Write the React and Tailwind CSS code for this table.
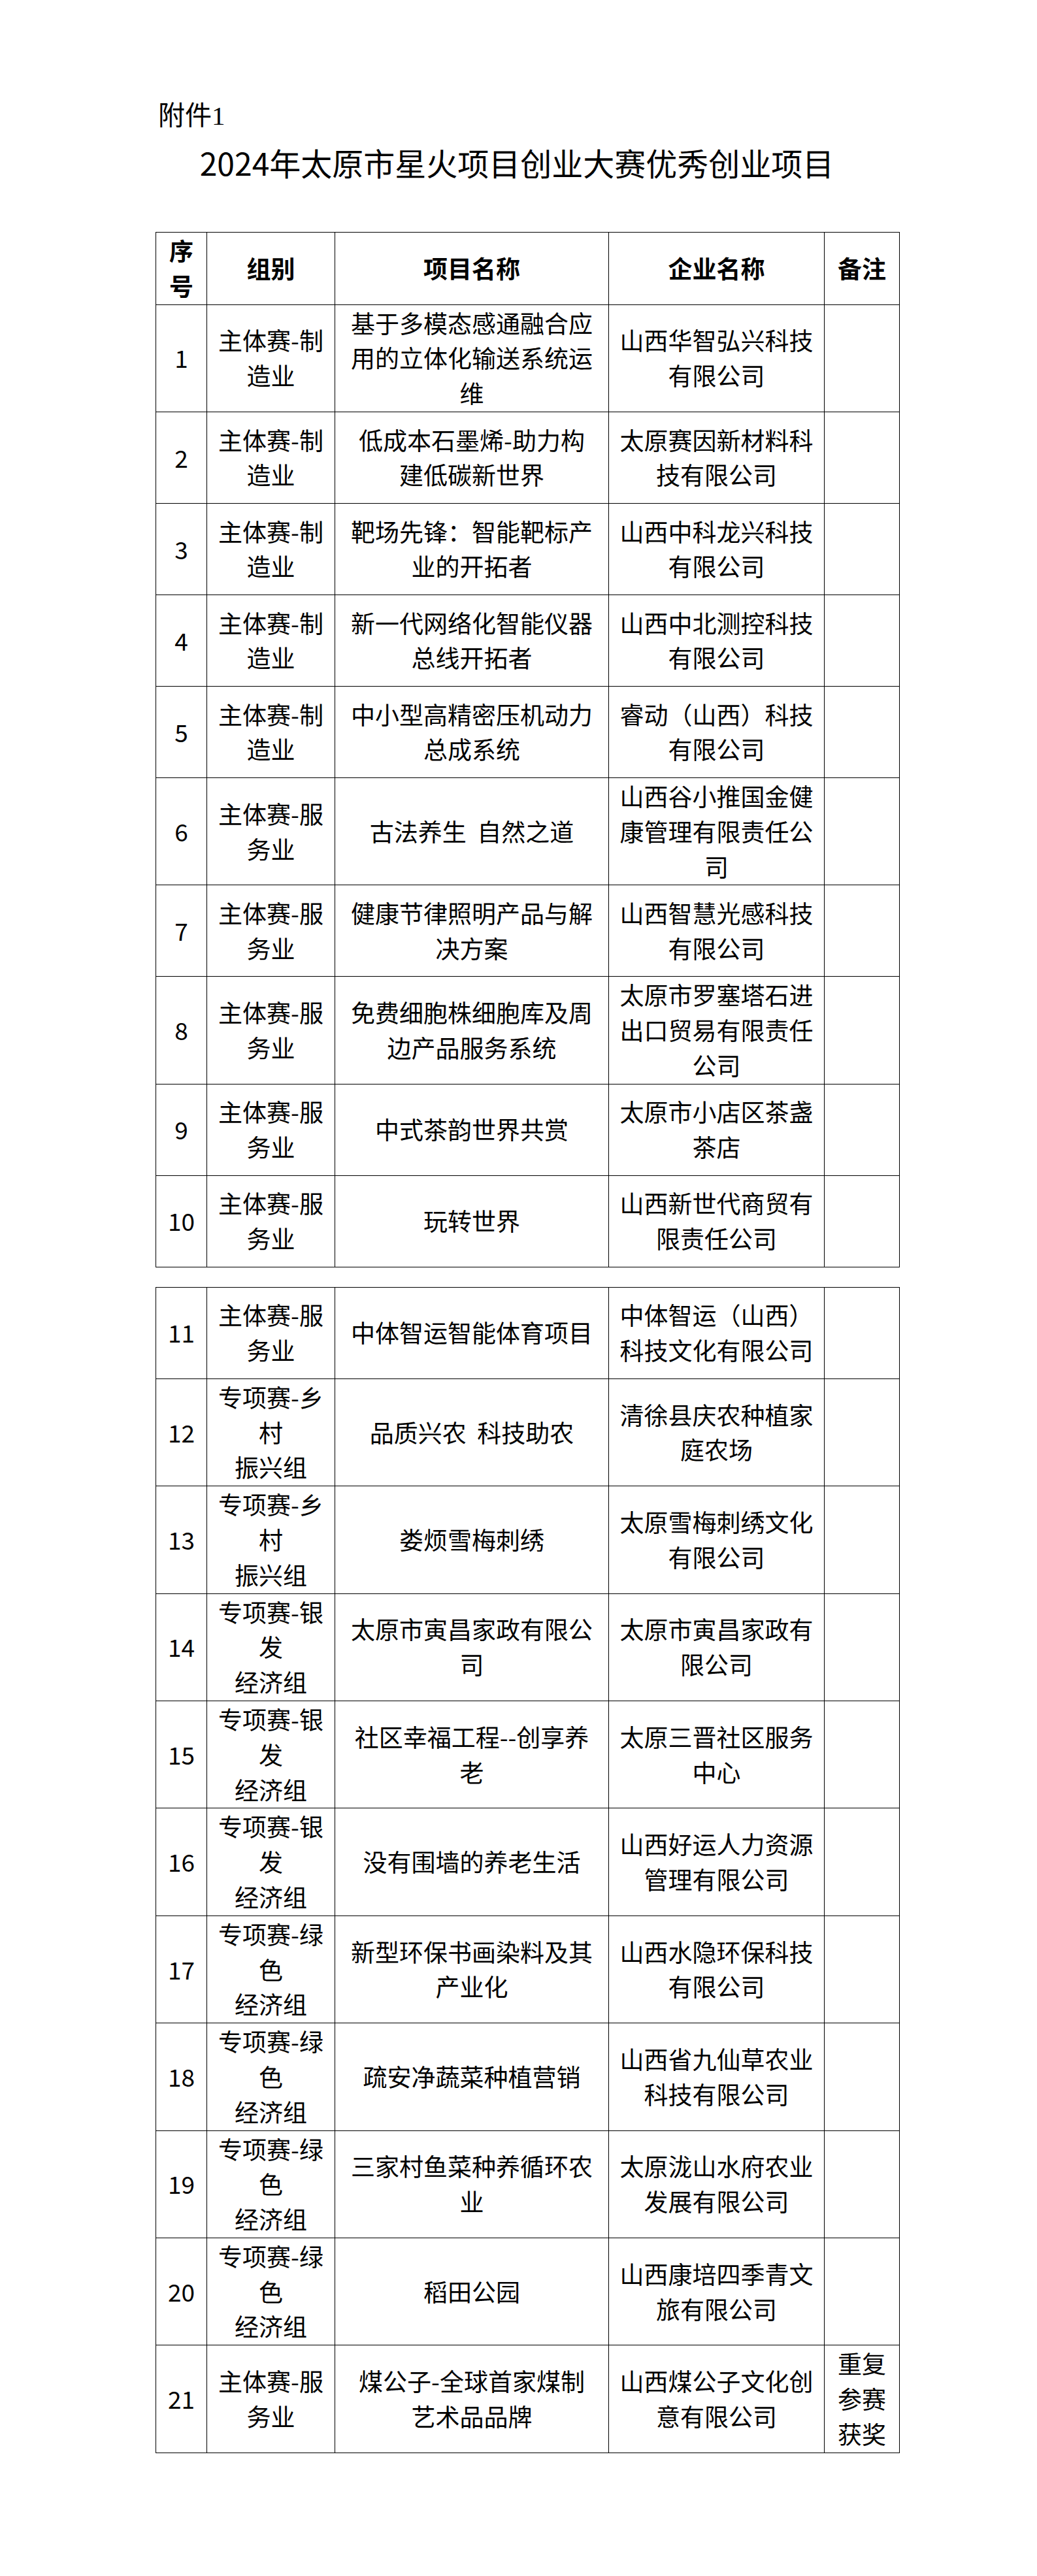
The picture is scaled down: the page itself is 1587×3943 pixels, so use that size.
import React from "react";

const FONT = { fontFamily: '"Noto Sans CJK SC", "Noto Sans", sans-serif' };

const table1 = [
  ["1", ["主体赛-制", "造业"], ["基于多模态感通融合应", "用的立体化输送系统运", "维"], ["山西华智弘兴科技", "有限公司"], []],
  ["2", ["主体赛-制", "造业"], ["低成本石墨烯-助力构", "建低碳新世界"], ["太原赛因新材料科", "技有限公司"], []],
  ["3", ["主体赛-制", "造业"], ["靶场先锋：智能靶标产", "业的开拓者"], ["山西中科龙兴科技", "有限公司"], []],
  ["4", ["主体赛-制", "造业"], ["新一代网络化智能仪器", "总线开拓者"], ["山西中北测控科技", "有限公司"], []],
  ["5", ["主体赛-制", "造业"], ["中小型高精密压机动力", "总成系统"], ["睿动（山西）科技", "有限公司"], []],
  ["6", ["主体赛-服", "务业"], ["古法养生\u00a0\u00a0自然之道"], ["山西谷小推国金健", "康管理有限责任公", "司"], []],
  ["7", ["主体赛-服", "务业"], ["健康节律照明产品与解", "决方案"], ["山西智慧光感科技", "有限公司"], []],
  ["8", ["主体赛-服", "务业"], ["免费细胞株细胞库及周", "边产品服务系统"], ["太原市罗塞塔石进", "出口贸易有限责任", "公司"], []],
  ["9", ["主体赛-服", "务业"], ["中式茶韵世界共赏"], ["太原市小店区茶盏", "茶店"], []],
  ["10", ["主体赛-服", "务业"], ["玩转世界"], ["山西新世代商贸有", "限责任公司"], []],
];

const table2 = [
  ["11", ["主体赛-服", "务业"], ["中体智运智能体育项目"], ["中体智运（山西）", "科技文化有限公司"], []],
  ["12", ["专项赛-乡", "村", "振兴组"], ["品质兴农\u00a0\u00a0科技助农"], ["清徐县庆农种植家", "庭农场"], []],
  ["13", ["专项赛-乡", "村", "振兴组"], ["娄烦雪梅刺绣"], ["太原雪梅刺绣文化", "有限公司"], []],
  ["14", ["专项赛-银", "发", "经济组"], ["太原市寅昌家政有限公", "司"], ["太原市寅昌家政有", "限公司"], []],
  ["15", ["专项赛-银", "发", "经济组"], ["社区幸福工程--创享养", "老"], ["太原三晋社区服务", "中心"], []],
  ["16", ["专项赛-银", "发", "经济组"], ["没有围墙的养老生活"], ["山西好运人力资源", "管理有限公司"], []],
  ["17", ["专项赛-绿", "色", "经济组"], ["新型环保书画染料及其", "产业化"], ["山西水隐环保科技", "有限公司"], []],
  ["18", ["专项赛-绿", "色", "经济组"], ["疏安净蔬菜种植营销"], ["山西省九仙草农业", "科技有限公司"], []],
  ["19", ["专项赛-绿", "色", "经济组"], ["三家村鱼菜种养循环农", "业"], ["太原泷山水府农业", "发展有限公司"], []],
  ["20", ["专项赛-绿", "色", "经济组"], ["稻田公园"], ["山西康培四季青文", "旅有限公司"], []],
  ["21", ["主体赛-服", "务业"], ["煤公子-全球首家煤制", "艺术品品牌"], ["山西煤公子文化创", "意有限公司"], ["重复", "参赛", "获奖"]],
];

function Lines({ lines }) {
  return lines.map((l, i) => (
    <div key={i} className="whitespace-nowrap">
      {l}
    </div>
  ));
}

function Cols() {
  return (
    <colgroup>
      <col className="w-[78px]" />
      <col className="w-[196px]" />
      <col className="w-[419px]" />
      <col className="w-[330px]" />
      <col className="w-[115px]" />
    </colgroup>
  );
}

const cell = "border border-black px-1 py-px text-center align-middle";

function Body({ rows }) {
  return (
    <tbody>
      {rows.map((r) => (
        <tr key={r[0]} className="h-[140px]">
          <td className={cell}>{r[0]}</td>
          <td className={cell}>
            <Lines lines={r[1]} />
          </td>
          <td className={cell}>
            <Lines lines={r[2]} />
          </td>
          <td className={cell}>
            <Lines lines={r[3]} />
          </td>
          <td className={cell}>
            <Lines lines={r[4]} />
          </td>
        </tr>
      ))}
    </tbody>
  );
}

export default function App() {
  return (
    <div className="bg-white w-[1587px] h-[3943px] text-black" style={FONT}>
      <div
        className="pl-[242px] pt-[152px] text-[41px] leading-[50px]"
        style={{ fontFamily: '"Liberation Serif", "Noto Sans CJK SC", serif' }}
      >
        附件1
      </div>
      <h1 className="mt-[17px] pr-[5px] text-center text-[48px] leading-[58px] font-normal">
        2024年太原市星火项目创业大赛优秀创业项目
      </h1>

      <div className="ml-[238px] mt-[78px] w-[1139px] text-[37px] leading-[53.8px]">
        <table className="table-fixed border-collapse w-[1139px]">
          <Cols />
          <thead>
            <tr className="h-[110px] font-bold">
              <th className={cell}>
                <Lines lines={["序", "号"]} />
              </th>
              <th className={cell}>组别</th>
              <th className={cell}>项目名称</th>
              <th className={cell}>企业名称</th>
              <th className={cell}>备注</th>
            </tr>
          </thead>
          <Body rows={table1} />
        </table>

        <table className="table-fixed border-collapse w-[1139px] mt-[30px]">
          <Cols />
          <Body rows={table2} />
        </table>
      </div>
    </div>
  );
}
